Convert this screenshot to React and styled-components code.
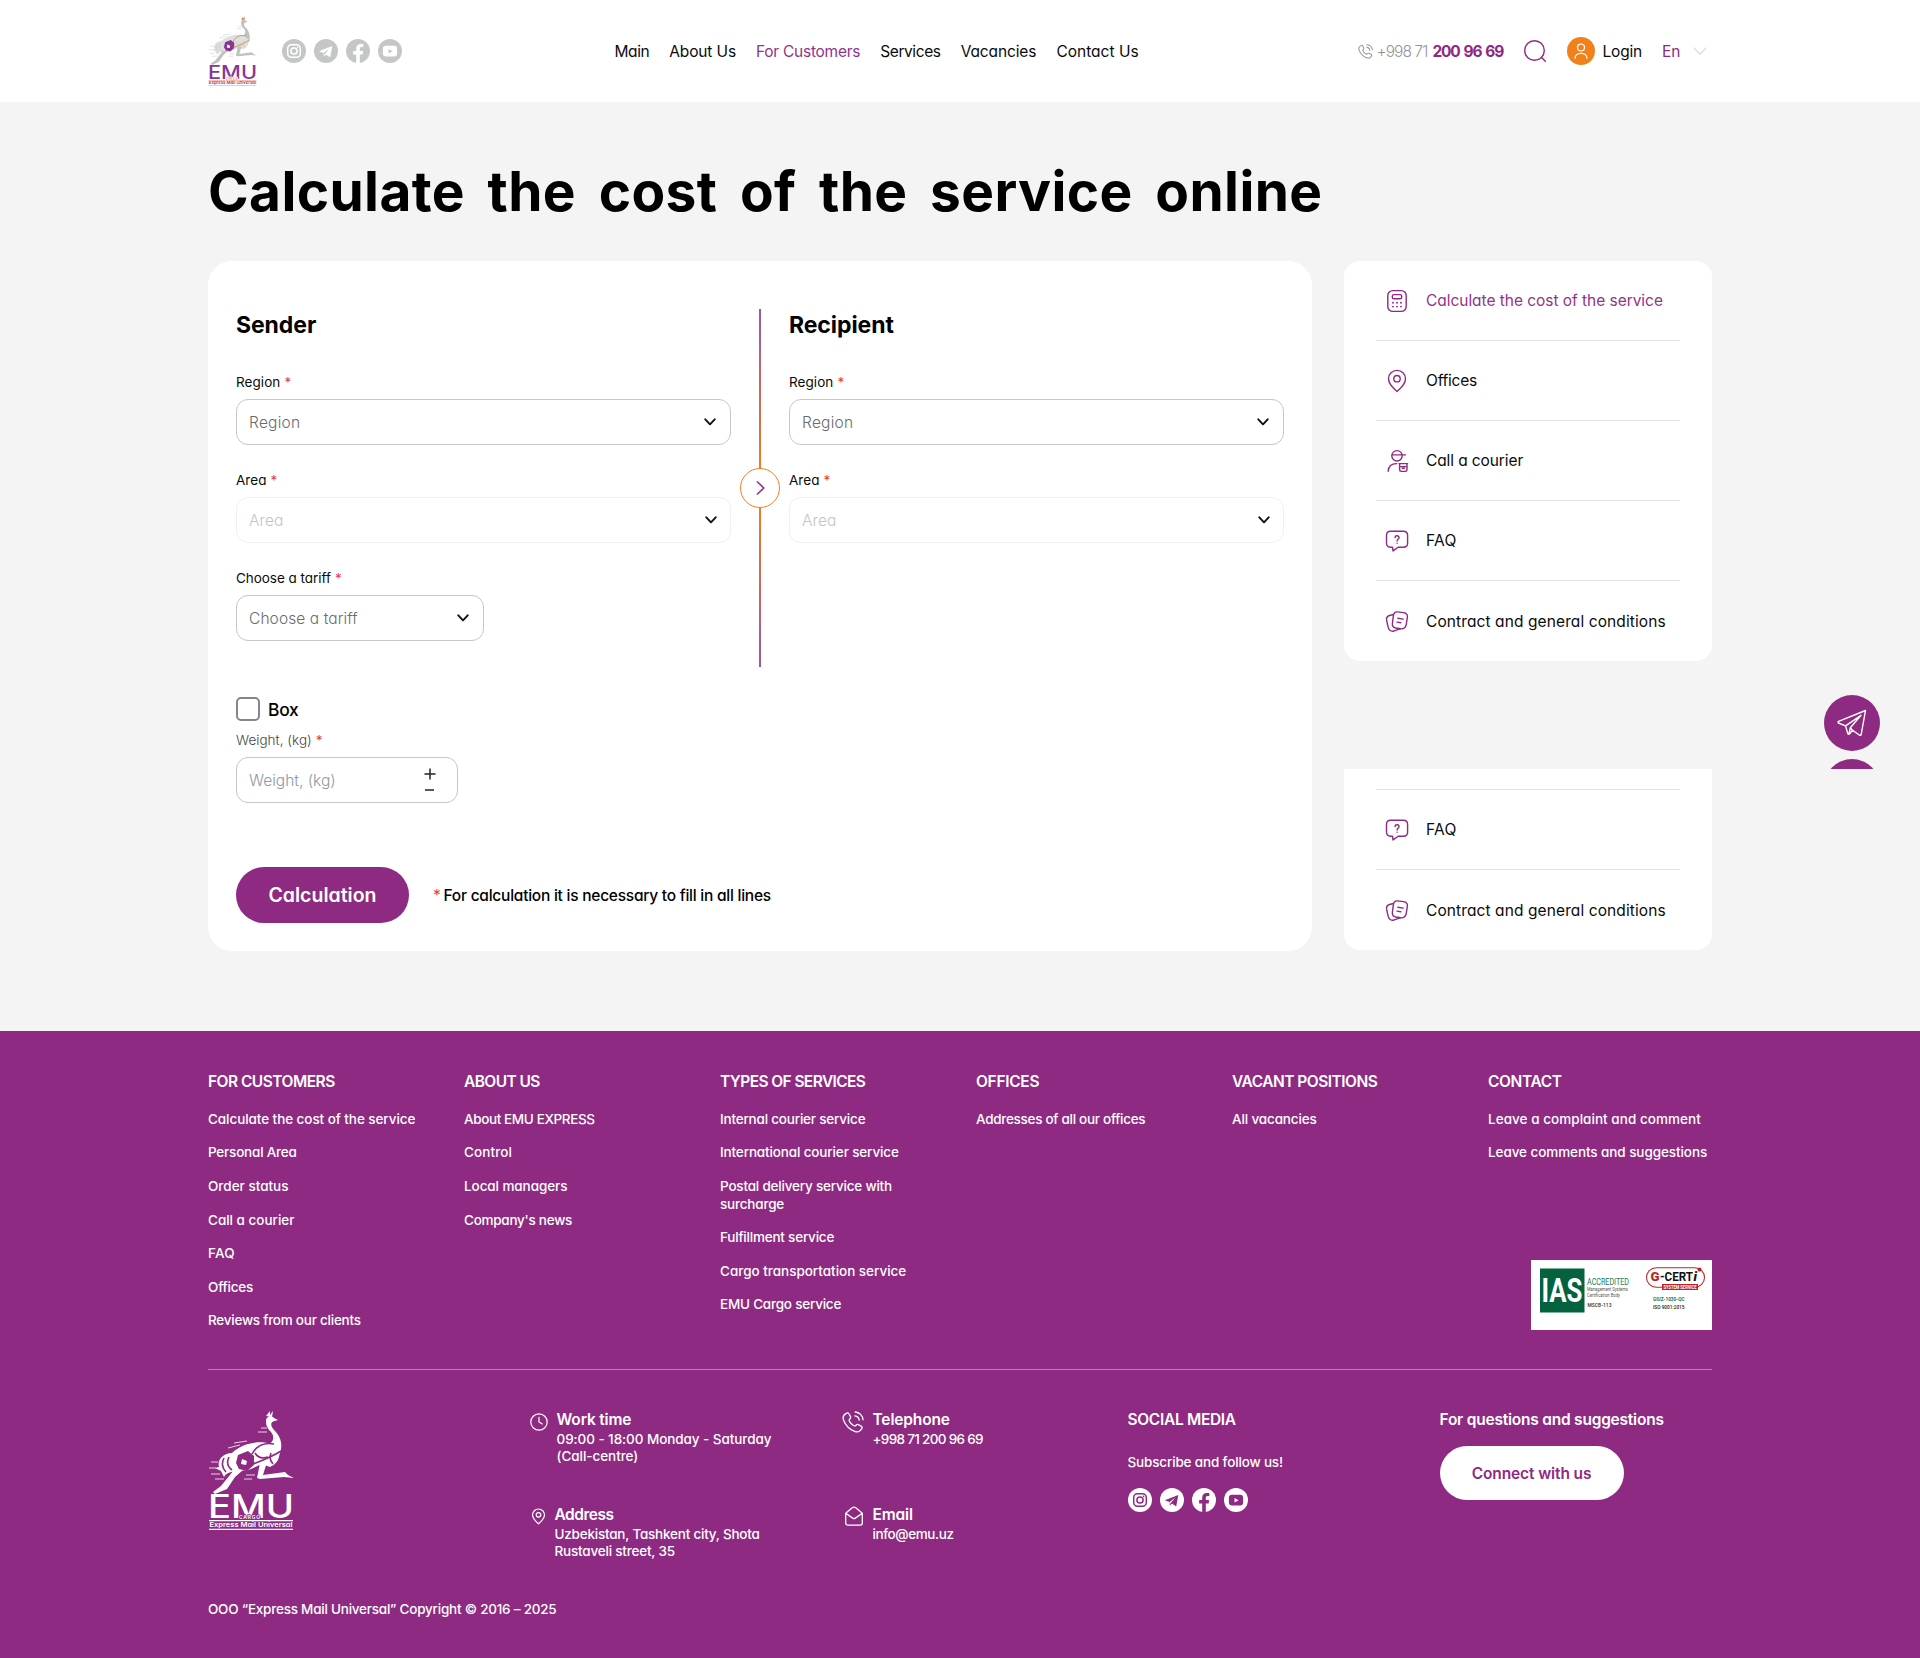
import React from "react";
import styled, { createGlobalStyle, css } from "styled-components";

const PURPLE = "#8e2a82";
const ORANGE = "#f0811c";
const CANVAS = "#f4f4f4";

const GlobalStyle = createGlobalStyle`
  *, *::before, *::after { box-sizing: border-box; }
  body {
    margin: 0;
    background: ${CANVAS};
    color: #0b0b0b;
    font-family: Inter, "Liberation Sans", sans-serif;
    font-feature-settings: "cv11";
    font-size: 15.5px;
  }
  a { color: inherit; text-decoration: none; }
  button { font: inherit; font-feature-settings: inherit; cursor: pointer; }
  svg { display: block; flex: none; }
`;

/* tracking in px, varies with the label */
const tracking = css`
  letter-spacing: ${(p) => (p.$ls || 0) - 0.02}px;
  white-space: nowrap;
`;

const Container = styled.div`
  width: 1504px;
  margin: 0 auto;
`;

/* ---------- header ---------- */
const Header = styled.header`
  height: 102px;
  background: #fff;
`;
const HeaderRow = styled(Container)`
  height: 102px;
  display: grid;
  grid-template-columns: 406.5px 1fr 354.5px;
  align-items: center;
`;
const Brand = styled.div`
  display: flex;
  align-items: center;
  gap: 25px;
`;
const Socials = styled.div`
  display: flex;
  gap: 8px;
`;
const Nav = styled.nav`
  display: flex;
  gap: 20.1px;
  padding-top: 1px;
`;
const NavLink = styled.a`
  ${tracking}
  color: ${(p) => (p.$active ? "#93338a" : "#0b0b0b")};
`;
const Tools = styled.div`
  display: flex;
  align-items: center;
`;
const Phone = styled.a`
  display: flex;
  align-items: center;
  color: #949494;
  font-weight: 300;
  margin-right: 20.5px;
  svg { margin-right: 4px; }
  strong {
    font-weight: 700;
    color: ${PURPLE};
    margin-left: 5px;
    letter-spacing: -1.2px;
    word-spacing: 1.6px;
    white-space: nowrap;
  }
`;
const Tracked = styled.span`
  ${tracking}
`;
const Avatar = styled.span`
  width: 28px;
  height: 28px;
  border-radius: 50%;
  background: ${ORANGE};
  display: grid;
  place-items: center;
  margin: 0 8px 0 21px;
`;
const Language = styled.span`
  display: flex;
  align-items: center;
  gap: 12.5px;
  margin-left: 20px;
  color: ${PURPLE};
`;

/* ---------- calculator ---------- */
const Main = styled.main`
  padding: 59px 0 80px;
`;
const Title = styled.h1`
  margin: 0 0 40px;
  font-size: 55px;
  line-height: 60px;
  font-weight: 700;
  font-feature-settings: normal;
  color: #000;
  white-space: nowrap;
  word-spacing: 9.2px;
  letter-spacing: 0.4px;
`;
const Columns = styled.div`
  display: grid;
  grid-template-columns: 1104px 368px;
  column-gap: 32px;
`;
const Card = styled.section`
  height: 690px;
  padding: 48px 28px 28px;
  background: #fff;
  border-radius: 24px;
`;
const Route = styled.div`
  display: grid;
  grid-template-columns: 495px 58px 495px;
  height: 356px;
`;
const Party = styled.div`
  display: flex;
  flex-direction: column;
`;
const PartyTitle = styled.h2`
  margin: 0 0 32px;
  font-size: 23px;
  line-height: 32px;
  font-weight: 700;
  letter-spacing: -0.08px;
  color: #000;
`;
const Field = styled.div`
  margin-bottom: 26px;
`;
const Label = styled.label`
  display: block;
  margin-bottom: 8px;
  font-size: 13.5px;
  line-height: 18px;
  font-weight: ${(p) => (p.$muted ? 300 : 400)};
  color: ${(p) => (p.$muted ? "#444" : "#0b0b0b")};
  ${tracking}
`;
const Star = styled.span`
  color: #ef3a3a;
  margin-left: 4px;
  line-height: 0;
  font-weight: 400;
`;
const Control = styled.div`
  width: ${(p) => p.$width}px;
  height: 46px;
  padding: 0 ${(p) => (p.$disabled ? 13 : 14)}px 0 12px;
  border: 1px solid ${(p) => (p.$disabled ? "#f1f1f1" : "#c6c6c6")};
  border-radius: 12px;
  display: flex;
  align-items: center;
  justify-content: space-between;
  font-weight: 300;
  color: ${(p) => (p.$disabled ? "#c4c4c4" : p.$input ? "#8f97a5" : "#6b6b6b")};
`;
const Stepper = styled.div`
  display: flex;
  flex-direction: column;
  align-items: center;
  gap: 7px;
  width: 12px;
  margin-right: 7px;
`;
const Divider = styled.div`
  display: flex;
  flex-direction: column;
  align-items: center;
`;
const Line = styled.span`
  width: 2px;
  flex: 1;
  background: linear-gradient(${(p) => (p.$flip ? "to top" : "to bottom")}, #a2559f, #ec7d20);
`;
const Knob = styled.span`
  width: 40px;
  height: 40px;
  border: 1.4px solid ${ORANGE};
  border-radius: 50%;
  display: grid;
  place-items: center;
`;
const CheckRow = styled.div`
  display: flex;
  align-items: center;
  gap: 8px;
  margin: 32px 0 10px;
  height: 24px;
  font-size: 17.4px;
  font-weight: 500;
  color: #000;
`;
const CheckBox = styled.span`
  width: 24px;
  height: 24px;
  border: 2px solid #85858a;
  border-radius: 5px;
`;
const Submit = styled.div`
  display: flex;
  align-items: center;
  gap: 24px;
  margin-top: 64px;
`;
const PrimaryButton = styled.button`
  width: 173px;
  height: 56px;
  padding: 0;
  border: 0;
  border-radius: 28px;
  background: ${PURPLE};
  color: #fff;
  font-size: 19.5px;
  font-weight: 600;
`;
const Note = styled.p`
  margin: 0;
  font-weight: 500;
  color: #000;
  ${tracking}
  ${Star} { margin: 0 3px 0 0; }
`;

/* ---------- sidebar ---------- */
const Sidebar = styled.aside`
  display: flex;
  flex-direction: column;
  gap: 108px;
`;
const Menu = styled.nav`
  padding: 0 32px;
  background: #fff;
  border-radius: ${(p) => (p.$cut ? "0 0 16px 16px" : "16px")};
`;
const MenuTail = styled.div`
  height: 21px;
  border-bottom: 1px solid #e3e3e3;
`;
const MenuItem = styled.a`
  height: 80px;
  padding-left: 9px;
  display: flex;
  align-items: center;
  gap: 17px;
  border-bottom: 1px solid #e3e3e3;
  color: ${(p) => (p.$active ? "#93338a" : "#0b0b0b")};
  ${tracking}
  &:last-child { border-bottom: 0; padding-top: 1px; }
  svg { color: ${PURPLE}; }
`;

/* ---------- floating contacts ---------- */
const Floating = styled.div`
  position: absolute;
  top: 695px;
  right: 40px;
  height: 74px;
  overflow: hidden;
  display: flex;
  flex-direction: column;
  gap: 8px;
`;
const FloatButton = styled.a`
  width: 56px;
  height: 56px;
  flex: none;
  border-radius: 50%;
  background: ${PURPLE};
  display: grid;
  place-items: center;
`;

/* ---------- footer ---------- */
const Footer = styled.footer`
  height: 627px;
  padding-top: 41px;
  background: ${PURPLE};
  color: #fff;
`;
const LinkGrid = styled.div`
  display: grid;
  grid-template-columns: repeat(6, 224px);
  column-gap: 32px;
  height: 297px;
  padding-bottom: 40px;
`;
const LinkColumn = styled.div`
  display: flex;
  flex-direction: column;
  gap: 16px;
`;
const FootTitle = styled.h3`
  margin: 0 0 ${(p) => p.$mb || 0}px;
  font-size: 15.5px;
  line-height: 20.5px;
  font-weight: 600;
  ${tracking}
`;
const FootLink = styled.a`
  font-size: 13.5px;
  line-height: 17.6px;
  font-weight: 500;
  letter-spacing: ${(p) => (p.$ls || 0) - 0.04}px;
  white-space: pre-line;
`;
const Certificate = styled.div`
  margin-top: auto;
  align-self: flex-end;
  background: #fff;
`;
const Contacts = styled.div`
  display: grid;
  grid-template-columns: 321.5px 312px 286px 312px 1fr;
  height: 231.6px;
  padding-top: 40.4px;
  border-top: 1px solid #bb7fb4;
`;
const Info = styled.div`
  display: grid;
  grid-template-columns: ${(p) => p.$icon}px 1fr;
  height: 95px;
  svg { margin-top: ${(p) => p.$drop || 0}px; }
`;
const InfoLine = styled.div`
  font-size: 13.5px;
  line-height: 17.3px;
  font-weight: 500;
  ${tracking}
`;
const Follow = styled.div`
  margin: 23.6px 0 16px;
`;
const ConnectButton = styled.button`
  width: 184px;
  height: 54px;
  padding: 1px 0 0;
  border: 0;
  border-radius: 27px;
  background: #fff;
  color: ${PURPLE};
  font-weight: 600;
  ${tracking}
`;

/* ---------- drawings ---------- */
const Chevron = () => (
  <svg width="12" height="8" viewBox="0 0 12 8" fill="none" stroke="#111" strokeWidth="1.9" strokeLinecap="round" strokeLinejoin="round">
    <path d="M1.3 1.3 6 6.3 10.7 1.3" />
  </svg>
);

const SocialIcons = ({ fill, hole }) => (
  <Socials>
    <svg width="24" height="24" viewBox="0 0 24 24" fill="none" stroke={hole} strokeWidth="1.5">
      <circle cx="12" cy="12" r="12" fill={fill} stroke="none" />
      <rect x="5.7" y="5.7" width="12.6" height="12.6" rx="3.8" />
      <circle cx="12" cy="12" r="3.1" />
      <circle cx="15.6" cy="8.4" r="0.8" fill={hole} stroke="none" />
    </svg>
    <svg width="24" height="24" viewBox="0 0 24 24">
      <circle cx="12" cy="12" r="12" fill={fill} />
      <path d="M4.8 12.3 18.3 6.9 16.2 18.4 11.9 15.4 9.7 17.4 9.6 13.9Z" fill={hole} />
      <path d="M9.7 17.3V13.9L15.6 9.2 11 14.8Z" fill={fill} />
      <path d="M9.9 17.3 10.9 14.8 12 15.5Z" fill={hole} />
    </svg>
    <svg width="24" height="24" viewBox="0 0 24 24">
      <circle cx="12" cy="12" r="12" fill={fill} />
      <path d="M10.2 24v-8.5H7.1V12h3.1V9.5c0-3.1 1.8-4.6 4.6-4.6.9 0 1.8.1 2.5.2v2.9h-1.6c-1.4 0-1.9.8-1.9 1.8V12h3.3l-.5 3.5h-2.8V24Z" fill={hole} />
    </svg>
    <svg width="24" height="24" viewBox="0 0 24 24">
      <circle cx="12" cy="12" r="12" fill={fill} />
      <rect x="4.9" y="6.8" width="14.2" height="10.8" rx="3" fill={hole} />
      <path d="M10.5 9.9 14.6 12.2 10.5 14.5Z" fill={fill} />
    </svg>
  </Socials>
);

const EmuLogo = ({ width, height, color }) => {
  const body = color ? "#dedfe1" : "#fff";
  const limb = color ? "#bfc1c2" : "#fff";
  const ink = color ? "#c9cbcc" : PURPLE;
  const accent = color ? "#ee8a3a" : PURPLE;
  const bag = color ? "#8b3592" : PURPLE;
  const word = color ? "#8b3592" : "#fff";
  const rule = color ? "#f2a86c" : "#fff";
  return (
    <svg width={width} height={height} viewBox="0 0 86 120" fill="none" preserveAspectRatio="none">
      <path d="M58 6 62 1 62 5 65 1 64 7Z" fill={color ? "#ee7434" : "#fff"} />
      <path d="M58 11C58 6 64 5 66 8L70 10 65 11.5C62 13 63 17 67 21C74 28 75 38 71 45L66 50 59 36C64 33 68 28 63 22C59 18 58 15 58 11Z" fill={limb} />
      <path d="M63 34C52 30 34 33 24 43C15 43 9 50 11 57L7 58 13 61 16 67C19 62 24 62 28 61L40 60C46 58 51 55 54 54L62 57C68 55 73 48 71 40Z" fill={body} />
      <path d="M16 48C13 54 15 59 18 62M21 47C18 53 20 57 24 60M47 43C50 48 54 49 60 47M63 43C61 48 62 51 65 54" stroke={ink} strokeWidth="1.6" />
      <path d="M52 53 59 52 55 65 77 62 80 65 86 68 76 67 52 69 49 68Z" fill={limb} />
      <path d="M26 60 35 60 27 67 19 79 7 84 5 82 13 76Z" fill={limb} />
      <path d="M30 45 40 41 46 46 46 55 39 61 31 59 28 53Z" fill={bag} />
      <path d="M34 49 39 51 38 55 33 54Z" fill="#fff" />
      <path d="M44 44C49 35 56 32 66 34M45 54C56 50 65 46 73 41" stroke={accent} strokeWidth="1.6" />
      <path d="M53 18h6M50 22h9M26 33l13-2M20 38l12-3M3 52h7M1 58h7M3 64h9M7 69h9M38 65h9M36 69h8" stroke={limb} strokeWidth="0.8" />
      <text x="0" y="108" fill={word} fontSize="32" fontWeight="500" textLength="86" lengthAdjust="spacingAndGlyphs">EMU</text>
      <text x="31" y="109" fill={color ? "#ee8a3a" : "#fff"} stroke={color ? "#fff" : PURPLE} strokeWidth="1.6" paintOrder="stroke" fontSize="5" fontWeight="600" textLength="21">CARGO</text>
      <path d="M1 110.6H85M1 119.4H85" stroke={rule} strokeWidth="1.2" />
      <text x="1.5" y="117.2" fill={word} fontSize="6.8" fontWeight="600" textLength="83" lengthAdjust="spacingAndGlyphs">Express Mail Universal</text>
    </svg>
  );
};

const PhoneIcon = ({ size, weight }) => (
  <svg width={size} height={size} viewBox="0 0 22 22" fill="none" stroke="currentColor" strokeWidth={weight} strokeLinecap="round" strokeLinejoin="round">
    <path d="M4.2 2.4C5.3 1.6 6.4 1.9 7 3L8.4 5.4C8.9 6.4 8.6 7.2 7.8 8 6.9 8.9 7 9.5 7.6 10.6 8.6 12.3 9.8 13.6 11.5 14.5 12.6 15.1 13.2 15.1 14 14.2 14.8 13.4 15.7 13.2 16.6 13.7L19.1 15.1C20.2 15.8 20.4 16.8 19.7 17.8 18.2 20.4 15.8 21.6 12.6 20.3 7.7 18.3 3.7 14.4 1.7 9.4.4 6.3 1.6 3.9 4.2 2.4Z" />
    <path d="M13.2 1C17.5 1.3 20.7 4.5 21 8.8M12.9 4.9C15.4 5.2 17 6.8 17.2 9.2" />
  </svg>
);

const PinIcon = ({ width, height, weight }) => (
  <svg width={width} height={height} viewBox="0 0 24 24" fill="none" stroke="currentColor" strokeWidth={weight} strokeLinejoin="round">
    <path d="M12 22.4C9 19.8 3.5 15.4 3.5 9.7a8.5 8.3 0 0 1 17 0C20.5 15.4 15 19.8 12 22.4Z" />
    <circle cx="12" cy="9.7" r="3.2" />
  </svg>
);

const MenuSvg = ({ children }) => (
  <svg width="24" height="24" viewBox="0 0 24 24" fill="none" stroke="currentColor" strokeWidth="1.4" strokeLinecap="round" strokeLinejoin="round">
    {children}
  </svg>
);

const menuIcons = {
  calculator: (
    <MenuSvg>
      <rect x="2.8" y="1.6" width="18.4" height="20.8" rx="5" />
      <rect x="7.3" y="5.6" width="9.4" height="4.2" rx="1.6" />
      <path d="M8 13.7h.01M12 13.7h.01M16 13.7h.01M8 17.6h.01M12 17.6h.01M16 17.6h.01" strokeWidth="1.9" />
    </MenuSvg>
  ),
  pin: <PinIcon width={24} height={24} weight={1.4} />,
  courier: (
    <MenuSvg>
      <circle cx="12" cy="6.8" r="5.2" />
      <path d="M7 5.9H20.5M3.2 22.2C3.2 17.6 6.600 14.4 11.7 14.6M14 14.6H22.6M14.6 14.6V20.6Q14.6 22.4 16.3 22.4H20.3Q22 22.4 22 20.6V14.6M15 17.6H21.6M17.3 19.2H19.3" />
    </MenuSvg>
  ),
  faq: (
    <MenuSvg>
      <path d="M5.6 2.2H18.4Q22.6 2.2 22.6 6.4V14.2Q22.6 18.2 18.4 18.2H13.2L8 21.9 7.5 18.2H5.6Q1.5 18 1.5 14V6.4Q1.5 2.2 5.6 2.2Z" />
      <path d="M10 8.6C10.1 6.2 14 6.2 14 8.7 14 10.3 12.1 10.3 12.1 12M12.1 14.2V14.3" />
    </MenuSvg>
  ),
  contract: (
    <MenuSvg>
      <path d="M12.3 1.9 18.6 2.6Q22.8 3.2 22.4 7.2L21.2 14.6Q20.2 19.2 15.8 18.8L10.6 18Q6.8 17.2 7.4 13.2L8.4 5.6Q9 1.7 12.3 1.9Z" />
      <path d="M8.4 4.5 4.6 5.5Q1 6.6 1.6 10.3L3.2 17.4Q4.4 21.8 8.6 21.2L15 18.9M12.8 8.2 18.2 9.1M12 12.1 15.8 12.7" />
    </MenuSvg>
  ),
};

const CertificateArt = () => (
  <svg width="181" height="70" viewBox="0 0 181 70" fontFamily="Roboto, sans-serif">
    <rect x="9" y="8.5" width="44.5" height="44" fill="#04623f" />
    <text x="10.5" y="42" fontSize="33" fontWeight="700" fill="#fff" textLength="41" lengthAdjust="spacingAndGlyphs">IAS</text>
    <text x="56" y="24.5" fontSize="9.6" fill="#217a58" textLength="42" lengthAdjust="spacingAndGlyphs">ACCREDITED</text>
    <text x="56" y="31.3" fontSize="5" fill="#555" textLength="41" lengthAdjust="spacingAndGlyphs">Management Systems</text>
    <text x="56" y="37.3" fontSize="5" fill="#555" textLength="33" lengthAdjust="spacingAndGlyphs">Certification Body</text>
    <text x="56.5" y="47.3" fontSize="5.4" fontWeight="700" fill="#555" textLength="24" lengthAdjust="spacingAndGlyphs">MSCB-113</text>
    <rect x="115.5" y="7.8" width="58" height="19.5" rx="9.7" fill="none" stroke="#b8282f" strokeWidth="1.1" />
    <text x="119.5" y="21" fontSize="12.5" fontWeight="900" fill="#c02228" textLength="9" lengthAdjust="spacingAndGlyphs">G</text>
    <text x="129" y="21" fontSize="12.5" fontWeight="700" fill="#111" textLength="33" lengthAdjust="spacingAndGlyphs">-CERT</text>
    <text x="162.5" y="21" fontSize="13" fontWeight="900" fontStyle="italic" fill="#111">i</text>
    <circle cx="168.5" cy="9.5" r="2" fill="#c02228" />
    <rect x="131" y="24" width="36" height="6" fill="#c02228" />
    <text x="132.5" y="29" fontSize="5.2" fontWeight="700" fill="#fff" textLength="33" lengthAdjust="spacingAndGlyphs">SYSTEM SERVICE</text>
    <text x="122" y="41" fontSize="4.6" fontWeight="700" fill="#217a58" textLength="31.5" lengthAdjust="spacingAndGlyphs">GIUZ-1030-QC</text>
    <text x="122" y="49" fontSize="4.6" fontWeight="500" fill="#222" textLength="31.5" lengthAdjust="spacingAndGlyphs">ISO 9001:2015</text>
  </svg>
);

/* ---------- data ---------- */
const navLinks = [
  ["Main", -0.4],
  ["About Us", -0.13],
  ["For Customers", -0.24, true],
  ["Services", -0.4],
  ["Vacancies", -0.1],
  ["Contact Us", 0.03],
];

const menu = [
  ["calculator", "Calculate the cost of the service", -0.02, true],
  ["pin", "Offices", -0.2],
  ["courier", "Call a courier", -0.08],
  ["faq", "FAQ", 0.3],
  ["contract", "Contract and general conditions", 0.12],
];

const linkColumns = [
  ["FOR CUSTOMERS", -0.5, [
    ["Calculate the cost of the service", -0.03],
    ["Personal Area", -0.17],
    ["Order status", 0.04],
    ["Call a courier", 0.03],
    ["FAQ", 0.3],
    ["Offices", -0.15],
    ["Reviews from our clients", -0.2],
  ]],
  ["ABOUT US", -0.55, [
    ["About EMU EXPRESS", -0.34],
    ["Control", 0.15],
    ["Local managers", -0.04],
    ["Company's news", -0.22],
  ]],
  ["TYPES OF SERVICES", -0.58, [
    ["Internal courier service", -0.16],
    ["International courier service", -0.1],
    ["Postal delivery service with\nsurcharge", -0.16],
    ["Fulfillment service", -0.17],
    ["Cargo transportation service", 0.02],
    ["EMU Cargo service", -0.18],
  ]],
  ["OFFICES", -0.28, [["Addresses of all our offices", -0.25]]],
  ["VACANT POSITIONS", -0.5, [["All vacancies", -0.1]]],
  ["CONTACT", -0.36, [
    ["Leave a complaint and comment", 0.08],
    ["Leave comments and suggestions", -0.04],
  ]],
];

const Select = ({ label, labelLs, ls, width = 495, disabled }) => (
  <Field>
    <Label $ls={labelLs}>{label}<Star>*</Star></Label>
    <Control $width={width} $disabled={disabled}>
      <Tracked $ls={ls}>{label}</Tracked>
      <Chevron />
    </Control>
  </Field>
);

const SideItem = ({ item: [icon, text, ls, active] }) => (
  <MenuItem $ls={ls} $active={active}>
    {menuIcons[icon]}
    {text}
  </MenuItem>
);

export default function App() {
  return (
    <>
      <GlobalStyle />
      <Header>
        <HeaderRow>
          <Brand>
            <EmuLogo width={49} height={70} color />
            <SocialIcons fill="#c5c7c7" hole="#fff" />
          </Brand>
          <Nav>
            {navLinks.map(([text, ls, active]) => (
              <NavLink key={text} $ls={ls} $active={active}>{text}</NavLink>
            ))}
          </Nav>
          <Tools>
            <Phone>
              <PhoneIcon size={15} weight={1.5} />
              <Tracked $ls={-0.91}>+998 71</Tracked>
              <strong>200 96 69</strong>
            </Phone>
            <svg width="22" height="22" viewBox="0 0 22 22" fill="none" stroke={PURPLE} strokeWidth="1.4" strokeLinecap="round">
              <circle cx="10.5" cy="10.5" r="9.8" />
              <path d="M17.6 17.6 21.3 21.3" />
            </svg>
            <Avatar>
              <svg width="14" height="16" viewBox="0 0 14 16" fill="none" stroke="#fff" strokeWidth="1.2" strokeLinecap="round">
                <circle cx="7" cy="4.5" r="3.5" />
                <path d="M1 15.2C1.2 8.7 12.8 8.7 13 15.2" />
              </svg>
            </Avatar>
            <Tracked $ls={-0.2}>Login</Tracked>
            <Language>
              En
              <svg width="14" height="8" viewBox="0 0 14 8" fill="none" stroke="#dadada" strokeWidth="1.2">
                <path d="M.6.6 7 7.2 13.4.6" />
              </svg>
            </Language>
          </Tools>
        </HeaderRow>
      </Header>

      <Main>
        <Container>
          <Title>Calculate the cost of the service online</Title>
          <Columns>
            <Card>
              <Route>
                <Party>
                  <PartyTitle>Sender</PartyTitle>
                  <Select label="Region" labelLs={0.09} ls={0.27} />
                  <Select label="Area" labelLs={0.05} ls={0.11} disabled />
                  <Select label="Choose a tariff" labelLs={-0.02} ls={0.12} width={248} />
                </Party>
                <Divider>
                  <Line />
                  <Knob>
                    <svg width="9" height="14" viewBox="0 0 9 14" fill="none" stroke="#94338c" strokeWidth="1.7" strokeLinecap="round" strokeLinejoin="round">
                      <path d="M1.5 1 7.8 7 1.5 13" />
                    </svg>
                  </Knob>
                  <Line $flip />
                </Divider>
                <Party>
                  <PartyTitle>Recipient</PartyTitle>
                  <Select label="Region" labelLs={0.09} ls={0.27} />
                  <Select label="Area" labelLs={0.05} ls={0.11} disabled />
                </Party>
              </Route>
              <CheckRow>
                <CheckBox />
                <Tracked $ls={-0.2}>Box</Tracked>
              </CheckRow>
              <Label $muted $ls={0.05}>Weight, (kg)<Star>*</Star></Label>
              <Control $width={222} $input>
                <Tracked $ls={0.03}>Weight, (kg)</Tracked>
                <Stepper>
                  <svg width="12" height="12" viewBox="0 0 12 12" stroke="#222" strokeWidth="1.5">
                    <path d="M6 .5V11.5M.5 6H11.5" />
                  </svg>
                  <svg width="12" height="6" viewBox="0 0 12 6" stroke="#222" strokeWidth="1.5">
                    <path d="M1 3H10" />
                  </svg>
                </Stepper>
              </Control>
              <Submit>
                <PrimaryButton>Calculation</PrimaryButton>
                <Note $ls={-0.22}><Star>*</Star>For calculation it is necessary to fill in all lines</Note>
              </Submit>
            </Card>
            <Sidebar>
              <Menu>
                {menu.map((item) => <SideItem key={item[0]} item={item} />)}
              </Menu>
              <Menu $cut>
                <MenuTail />
                {menu.slice(3).map((item) => <SideItem key={item[0]} item={item} />)}
              </Menu>
            </Sidebar>
          </Columns>
        </Container>
      </Main>

      <Floating>
        <FloatButton>
          <svg width="30" height="28" viewBox="0 0 30 28" fill="none" stroke="#fff" strokeWidth="1.4" strokeLinejoin="round" strokeLinecap="round">
            <path d="M28.5 1.5 1.5 12.3Q.6 13.2 1.5 14L8.5 16.8 10.8 24.6Q11.6 25.8 12.6 24.8L15.5 21.3 22.6 26.3Q23.8 26.7 24.2 25.5L28.5 1.5ZM8.5 16.8 24 6.3 13.3 18.8 12 24.6M13.3 18.8 15.5 21.3" />
          </svg>
        </FloatButton>
        <FloatButton />
      </Floating>

      <Footer>
        <Container>
          <LinkGrid>
            {linkColumns.map(([title, ls, links]) => (
              <LinkColumn key={title}>
                <FootTitle $ls={ls} $mb={2.3}>{title}</FootTitle>
                {links.map(([text, lls]) => <FootLink key={text} $ls={lls}>{text}</FootLink>)}
                {title === "CONTACT" && <Certificate><CertificateArt /></Certificate>}
              </LinkColumn>
            ))}
          </LinkGrid>
          <Contacts>
            <EmuLogo width={86} height={120} />
            <div>
              <Info $icon={27} $drop={3}>
                <svg width="18" height="18" viewBox="0 0 18 18" fill="none" stroke="#fff" strokeWidth="1.2" strokeLinecap="round">
                  <circle cx="9" cy="9" r="8.2" />
                  <path d="M9 4.3V9L12.3 11" />
                </svg>
                <div>
                  <FootTitle $ls={-0.14}>Work time</FootTitle>
                  <InfoLine $ls={-0.05}>09:00 - 18:00 Monday - Saturday</InfoLine>
                  <InfoLine $ls={-0.03}>(Call-centre)</InfoLine>
                </div>
              </Info>
              <Info $icon={25} $drop={2.5}>
                <PinIcon width={17} height={17} weight={1.7} />
                <div>
                  <FootTitle $ls={-0.44}>Address</FootTitle>
                  <InfoLine $ls={-0.2}>Uzbekistan, Tashkent city, Shota</InfoLine>
                  <InfoLine $ls={-0.18}>Rustaveli street, 35</InfoLine>
                </div>
              </Info>
            </div>
            <div>
              <Info $icon={31} $drop={0.6}>
                <PhoneIcon size={22} weight={1.3} />
                <div>
                  <FootTitle $ls={-0.13}>Telephone</FootTitle>
                  <InfoLine $ls={-0.66}>+998 71 200 96 69</InfoLine>
                </div>
              </Info>
              <Info $icon={31} $drop={0.5}>
                <svg width="23" height="20" viewBox="0 0 23 20" fill="none" stroke="#fff" strokeWidth="1.3" strokeLinejoin="round">
                  <path d="M3.7 7.2 10.5 1.6Q12 .6 13.5 1.6L20.3 7.2V17Q20.3 19.2 18 19.2H6Q3.7 19.2 3.7 17ZM3.7 7.2 10.7 12.1Q12 13 13.3 12.1L20.3 7.2" />
                </svg>
                <div>
                  <FootTitle $ls={-0.12}>Email</FootTitle>
                  <InfoLine $ls={-0.38}>info@emu.uz</InfoLine>
                </div>
              </Info>
            </div>
            <div>
              <FootTitle $ls={-0.3}>SOCIAL MEDIA</FootTitle>
              <Follow><InfoLine $ls={-0.14}>Subscribe and follow us!</InfoLine></Follow>
              <SocialIcons fill="#fff" hole={PURPLE} />
            </div>
            <div>
              <FootTitle $ls={-0.2} $mb={15.6}>For questions and suggestions</FootTitle>
              <ConnectButton $ls={-0.09}>Connect with us</ConnectButton>
            </div>
          </Contacts>
          <InfoLine $ls={-0.21}>OOO “Express Mail Universal” Copyright © 2016 – 2025</InfoLine>
        </Container>
      </Footer>
    </>
  );
}
